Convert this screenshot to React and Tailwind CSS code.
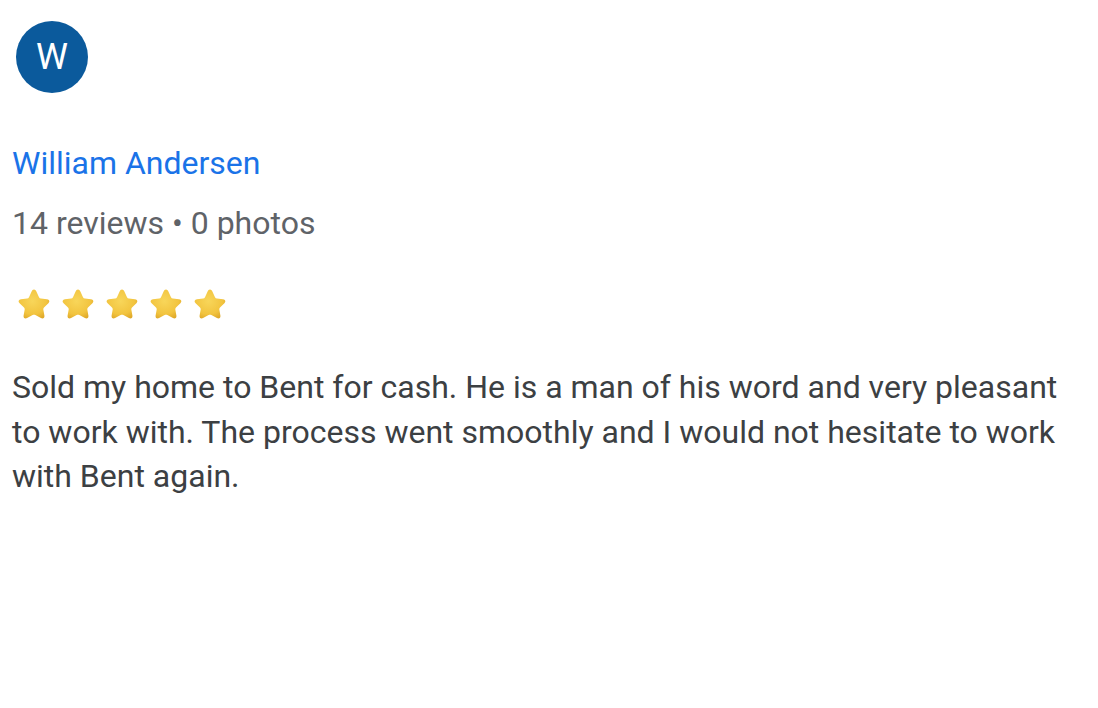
import React from "react";

function Star() {
  return (
    <svg width="36" height="34" viewBox="0 0 36 34">
      <defs>
        <radialGradient id="sg" cx="45%" cy="40%" r="65%">
          <stop offset="0%" stopColor="#f8d65a" />
          <stop offset="70%" stopColor="#f2c43f" />
          <stop offset="100%" stopColor="#e0a92a" />
        </radialGradient>
      </defs>
      <path
        d="M18 2.5 C19.2 2.5 19.8 3.4 20.4 4.6 L23 10.2 C23.4 11 24 11.4 24.9 11.5 L31 12.3 C33.4 12.6 34.1 14.6 32.4 16.2 L28 20.4 C27.4 21 27.2 21.7 27.3 22.5 L28.4 28.6 C28.8 31 27 32.2 24.9 31.1 L19.4 28.1 C18.5 27.6 17.5 27.6 16.6 28.1 L11.1 31.1 C9 32.2 7.2 31 7.6 28.6 L8.7 22.5 C8.8 21.7 8.6 21 8 20.4 L3.6 16.2 C1.9 14.6 2.6 12.6 5 12.3 L11.1 11.5 C12 11.4 12.6 11 13 10.2 L15.6 4.6 C16.2 3.4 16.8 2.5 18 2.5 Z"
        fill="url(#sg)"
      />
    </svg>
  );
}

export default function App() {
  return (
    <div className="w-[1098px] h-[708px] bg-white pl-[12px] pt-[21px]" style={{ fontFamily: "Roboto, sans-serif" }}>
      <div className="ml-[4px] w-[72px] h-[72px] rounded-full bg-[#0b5a9c] flex items-center justify-center text-white text-[36px] leading-none">
        W
      </div>
      <div className="mt-[50px] text-[#1a73e8] text-[32px] leading-[40px]">William Andersen</div>
      <div className="mt-[20px] text-[#5f6368] text-[32px] leading-[40px]">14 reviews • 0 photos</div>
      <div className="mt-[44px] flex gap-[8px] ml-[4px]">
        <Star />
        <Star />
        <Star />
        <Star />
        <Star />
      </div>
      <div className="mt-[44px] text-[#3c4043] text-[32px] leading-[44.5px] w-[1065px]">
        Sold my home to Bent for cash. He is a man of his word and very pleasant to work with. The process went smoothly and I would not hesitate to work with Bent again.
      </div>
    </div>
  );
}
